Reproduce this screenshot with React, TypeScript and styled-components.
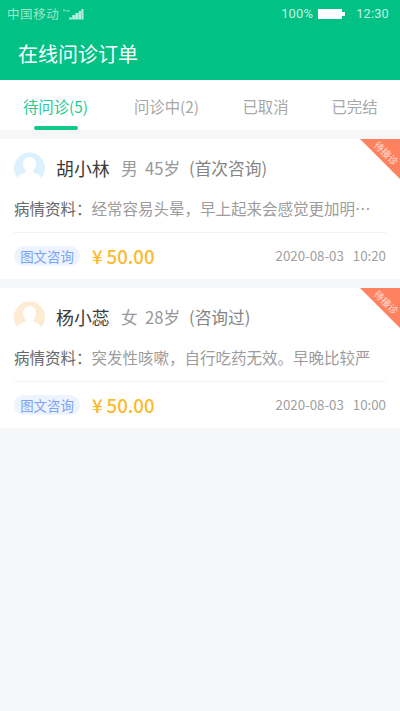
import React from "react";
import styled, { createGlobalStyle } from "styled-components";

const GlobalStyle = createGlobalStyle`
  * { box-sizing: border-box; }
  body {
    margin: 0;
    background: #f6f7f9;
    font-family: "Noto Sans CJK SC", "Noto Sans", sans-serif;
    white-space: nowrap;
  }
`;

const Screen = styled.div`
  width: 400px;
  height: 711px;
  overflow: hidden;
  background: #f6f7f9;
`;

const Header = styled.header`
  height: 80px;
  background: #02c185;
  color: #fff;
`;

const StatusBar = styled.div`
  display: flex;
  align-items: center;
  height: 28px;
  padding: 0 11px 0 7px;
  font-size: 12px;
  line-height: 28px;
  color: #c5f4e2;
`;

const Carrier = styled.span`
  width: 55px;
  font-size: 12.5px;
  letter-spacing: 0.6px;
  color: #9ce8cc;
`;

const Signal = styled.svg`
  flex: none;
`;

const StatusRight = styled.div`
  display: flex;
  align-items: center;
  margin-left: auto;
  font-family: Roboto, "Noto Sans", sans-serif;
`;

const Percent = styled.span`
  font-size: 12.9px;
  letter-spacing: 0.2px;
`;

const Battery = styled.svg`
  margin: 0 11px 0 5px;
`;

const Clock = styled.span`
  font-size: 12.7px;
  letter-spacing: 0.25px;
`;

const Title = styled.h1`
  margin: 0;
  padding-left: 18px;
  font-size: 20px;
  line-height: 52px;
  font-weight: 400;
`;

const Tabs = styled.nav`
  display: grid;
  grid-template-columns: 111px 111px 87px 91px;
  height: 50px;
  background: #fff;
`;

const Tab = styled.div<{ $active?: boolean }>`
  display: flex;
  flex-direction: column;
  align-items: center;
  justify-content: space-between;
  font-size: 15.4px;
  line-height: 52px;
  color: ${(p) => (p.$active ? "#25cb93" : "#a8a8a8")};

  &::after {
    content: "";
    flex: none;
    width: 44px;
    height: 4px;
    margin-top: -6px;
    border-radius: 2px;
    background: ${(p) => (p.$active ? "#14c88b" : "transparent")};
  }
`;

const List = styled.main`
  display: flex;
  flex-direction: column;
  gap: 9px;
  padding-top: 9px;
`;

const Card = styled.article`
  position: relative;
  height: 140px;
  padding: 0 14px;
  overflow: hidden;
  background: #fff;
`;

const Patient = styled.div`
  display: grid;
  grid-template-columns: 42px 65px 24px 44px auto;
  align-items: center;
  height: 58px;
  font-size: 16.7px;
  line-height: 58px;
  color: #999;
`;

const Avatar = styled.svg`
  display: block;
  margin-bottom: 2px;
`;

const Name = styled.span`
  font-size: 17.9px;
  color: #3b3b3b;
`;

const Note = styled.span`
  color: #858585;
`;

const Condition = styled.div`
  height: 35px;
  font-size: 15.5px;
  line-height: 23px;
  color: #9c9c9c;
`;

const Label = styled.span`
  color: #686868;
`;

const Footer = styled.div`
  display: flex;
  align-items: center;
  height: 47px;
  padding-bottom: 1px;
  border-top: 1px solid #f1f2f3;
`;

const Badge = styled.span`
  width: 66px;
  height: 20px;
  border-radius: 10px;
  background: #edf3ff;
  font-size: 13.4px;
  line-height: 20px;
  text-align: center;
  color: #7ba2f6;
`;

const Price = styled.span`
  display: flex;
  gap: 4px;
  margin-left: 12px;
  font-size: 18.6px;
  line-height: 24px;
  font-weight: 500;
  color: #fbb92c;
`;

const Time = styled.span`
  display: flex;
  gap: 9px;
  margin-left: auto;
  font-size: 13.3px;
  color: #a0a0a0;
`;

const Ribbon = styled.div`
  position: absolute;
  top: 0;
  right: 0;
  width: 40px;
  height: 40px;
  background: #ff8260;
  clip-path: polygon(0 0, 100% 0, 100% 100%);
`;

const RibbonText = styled.span`
  position: absolute;
  top: 8px;
  left: 10px;
  width: 32px;
  font-size: 9.6px;
  line-height: 13px;
  text-align: center;
  color: #ffe0d7;
  transform: rotate(45deg);
`;

interface Order {
  name: string;
  gender: string;
  age: string;
  note: string;
  condition: string;
  date: string;
  time: string;
  tint: string;
}

const orders: Order[] = [
  {
    name: "胡小林",
    gender: "男",
    age: "45岁",
    note: "(首次咨询)",
    condition: "经常容易头晕，早上起来会感觉更加明⋯",
    date: "2020-08-03",
    time: "10:20",
    tint: "#dcf0fd",
  },
  {
    name: "杨小蕊",
    gender: "女",
    age: "28岁",
    note: "(咨询过)",
    condition: "突发性咳嗽，自行吃药无效。早晚比较严",
    date: "2020-08-03",
    time: "10:00",
    tint: "#feebd3",
  },
];

const OrderCard = ({ order }: { order: Order }) => (
  <Card>
    <Patient>
      <Avatar width="31" height="31" viewBox="0 0 31 31">
        <path
          d="M4 26.5A15.5 15.5 0 1 1 27 26.5C26.5 23 24 21.800 20 21C18.800 20.700 18.800 19.500 19.500 18.500C21 16.500 22 14.500 22 11.500C22 7.500 19 5 15.500 5S9 7.500 9 11.500C9 14.500 10 16.500 11.500 18.500C12.200 19.500 12.200 20.700 11 21C7 21.800 4.500 23 4 26.500Z"
          fill={order.tint}
        />
      </Avatar>
      <Name>{order.name}</Name>
      <span>{order.gender}</span>
      <span>{order.age}</span>
      <Note>{order.note}</Note>
    </Patient>
    <Condition>
      <Label>病情资料：</Label>
      {order.condition}
    </Condition>
    <Footer>
      <Badge>图文咨询</Badge>
      <Price>
        <span>¥</span>
        <span>50.00</span>
      </Price>
      <Time>
        <span>{order.date}</span>
        <span>{order.time}</span>
      </Time>
    </Footer>
    <Ribbon>
      <RibbonText>待接诊</RibbonText>
    </Ribbon>
  </Card>
);

export default function App() {
  return (
    <>
      <GlobalStyle />
      <Screen>
        <Header>
          <StatusBar>
            <Carrier>中国移动</Carrier>
            <Signal width="22" height="12" viewBox="0 0 22 12">
              <path d="M1 2h3M2 2v2M5 4V2l1 1 1-1v2" stroke="#8ae3c2" strokeWidth="0.8" fill="none" />
              <path
                d="M7 9.500h3V11.500H7zM10.200 7h3v4.500h-3zM13.400 5H16.400v6.500h-3zM16.700 3h2.500v8.500h-2.500zM19.500 1h2v10.500h-2z"
                fill="#b4f0d9"
              />
            </Signal>
            <StatusRight>
              <Percent>100%</Percent>
              <Battery width="27" height="10" viewBox="0 0 27 10">
                <path d="M0 0h24v3h3v4h-3v3H0z" fill="#fff" />
              </Battery>
              <Clock>12:30</Clock>
            </StatusRight>
          </StatusBar>
          <Title>在线问诊订单</Title>
        </Header>
        <Tabs>
          <Tab $active>待问诊(5)</Tab>
          <Tab>问诊中(2)</Tab>
          <Tab>已取消</Tab>
          <Tab>已完结</Tab>
        </Tabs>
        <List>
          {orders.map((order) => (
            <OrderCard key={order.name} order={order} />
          ))}
        </List>
      </Screen>
    </>
  );
}
